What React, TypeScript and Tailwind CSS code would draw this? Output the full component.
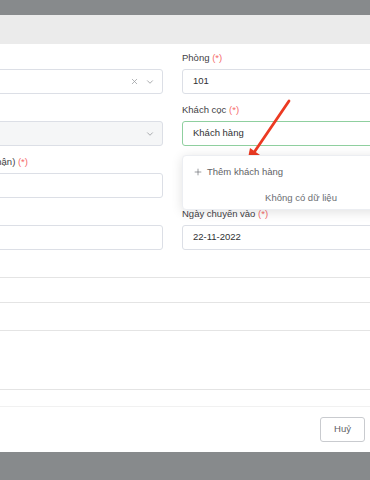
import { ChevronDown, Plus, X } from "lucide-react";

const font = { fontFamily: '"Liberation Sans", Arial, sans-serif' };

function Label({ text }: { text?: string }) {
  return (
    <div className="h-[14px] leading-[14px] mb-[4px] text-[9.5px] text-[#3f4145] whitespace-nowrap">
      {text && (
        <>
          {text} <span className="text-[#f56c6c]">(*)</span>
        </>
      )}
    </div>
  );
}

function Input({
  value,
  disabled,
  focused,
  clearable,
  select,
}: {
  value?: string;
  disabled?: boolean;
  focused?: boolean;
  clearable?: boolean;
  select?: boolean;
}) {
  return (
    <div
      className={`h-[25px] rounded-[3px] border flex items-center px-[10px] text-[9.5px] text-[#303133] ${
        focused ? "border-[#8fcf9f]" : "border-[#dcdfe6]"
      } ${disabled ? "bg-[#f5f6f7]" : "bg-white"}`}
    >
      <span className="flex-1 truncate">{value}</span>
      {clearable && <X size={9} strokeWidth={2} className="text-[#9a9ca0] mr-[6px]" />}
      {select && <ChevronDown size={10} strokeWidth={2} className="text-[#9a9ca0] -mr-[3px]" />}
    </div>
  );
}

export default function App() {
  return (
    <div className="relative w-[370px] h-[480px] overflow-hidden bg-[#878a8c]" style={font}>
      <div className="mt-[15px] -ml-[95px] w-[535px] h-[437px] bg-white flex flex-col">
        <div className="h-[29px] bg-[#ebebeb]" />

        <div className="px-[20px] pt-[7px] grid grid-cols-2 gap-x-[19px] gap-y-[9px]">
          <div>
            <Label />
            <Input clearable select />
          </div>
          <div>
            <Label text="Phòng" />
            <Input value="101" />
          </div>

          <div>
            <Label />
            <Input disabled select />
          </div>
          <div className="relative">
            <Label text="Khách cọc" />
            <Input value="Khách hàng" focused />
            <div className="absolute z-10 left-0 top-[52px] w-[238px] h-[55px] bg-white rounded-[4px] border border-[#eceef2] shadow-[0_2px_12px_rgba(0,0,0,0.12)] text-[9.5px]">
              <div className="h-[22px] mt-[5px] flex items-center pl-[10px] text-[#5f6266]">
                <Plus size={10} strokeWidth={1.5} className="mr-[4px]" />
                Thêm khách hàng
              </div>
              <div className="h-[22px] mt-[4px] flex items-center justify-center text-[#6b6e73]">
                Không có dữ liệu
              </div>
            </div>
          </div>

          <div>
            <Label text="Số tiền cọc (đã nhận)" />
            <Input />
          </div>
          <div />

          <div>
            <Label />
            <Input />
          </div>
          <div>
            <Label text="Ngày chuyển vào" />
            <Input value="22-11-2022" />
          </div>
        </div>

        <div className="mt-[27px] border-t border-[#e4e4e4] h-[25px]" />
        <div className="border-t border-[#e4e4e4] h-[28px]" />
        <div className="border-t border-[#e4e4e4] h-[59px]" />
        <div className="border-t border-[#e4e4e4] h-[17px]" />

        <div className="flex-1 border-t border-[#f1f1f1] flex justify-end items-start pt-[10px] pr-[75px]">
          <button className="w-[45px] h-[25px] rounded-[3px] border border-[#c9cbcf] text-[9.5px] text-[#606266] bg-white">
            Huỷ
          </button>
        </div>
      </div>

      <svg className="absolute inset-0 pointer-events-none" width="370" height="480">
        <line x1="289" y1="101" x2="255" y2="151" stroke="#ec3a22" strokeWidth="2.8" strokeLinecap="round" />
        <polygon points="247,163 260,155 250,148" fill="#ec3a22" />
      </svg>
    </div>
  );
}
